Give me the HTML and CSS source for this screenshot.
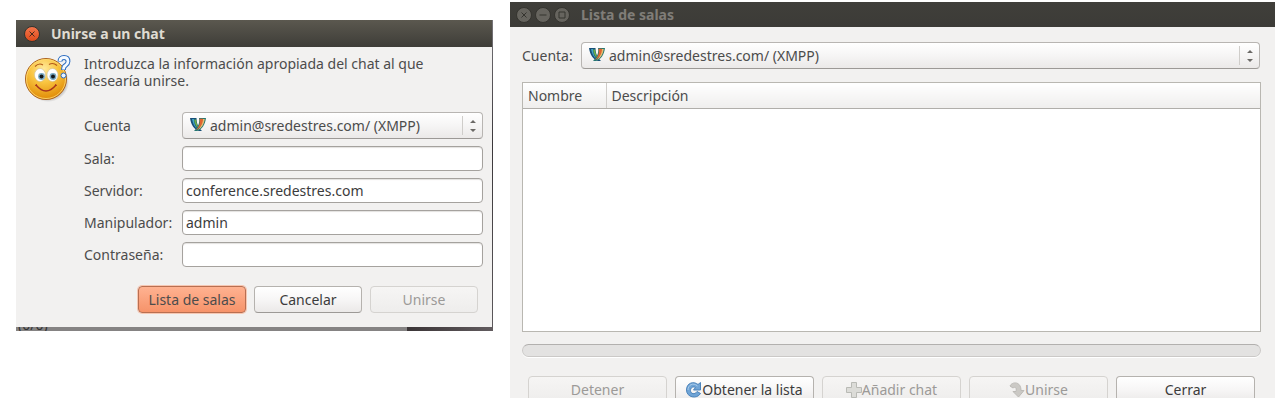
FILE: index.html
```
<!DOCTYPE html>
<html lang="es">
<head>
<meta charset="utf-8">
<title>Unirse a un chat</title>
<link rel="stylesheet" href="styles.css">
</head>
<body>
<svg class="defs" aria-hidden="true">
  <defs>
    <symbol id="xmpp" viewBox="0 0 16 14">
      <path d="M0 0H6.500C6.500 5 8 9 12 13H9C4 11.500 1 7 0 0Z" fill="#174f78"/>
      <path d="M2 1H4C4 6 6 10 9 12C5 10 3 6 2 1Z" fill="#42a4c8"/>
      <path d="M4.200 1.500H6.200C6.200 6 8 9 10.500 12C6.500 10 4.500 6 4.200 1.500Z" fill="#6ab04a"/>
      <path d="M16 0H9C10 5 8 9 4 13H7C12 11.500 15 7 16 0Z" fill="#26776f"/>
      <path d="M14.800 1H12.500C12 6 10 10 7.500 12C12 10 14 6 14.800 1Z" fill="#e5bd73"/>
      <path d="M13 .8H9.500C10.500 5 9.500 8.500 6 12C11 9.500 13 5 13 .8Z" fill="#e3652f"/>
    </symbol>
    <symbol id="arrows" viewBox="0 0 6 12">
      <path d="M0 3 L3 0 L6 3Z M0 9 L3 12 L6 9Z" fill="#6b6966"/>
    </symbol>
  </defs>
</svg>
<main class="desktop">
  <section class="backdrop">
    <div class="window dialog">
      <header class="titlebar active">
        <button class="wm close" aria-label="Cerrar ventana"><svg viewBox="0 0 14 14"><path d="M4.500 4.500l5 5m0-5l-5 5"/></svg></button>
        <h1>Unirse a un chat</h1>
      </header>
      <form class="join">
        <svg class="smiley" viewBox="0 0 48 48" aria-hidden="true">
          <defs>
            <radialGradient id="face" cx=".45" cy=".25" r=".75"><stop offset="0" stop-color="#ffe99a"/><stop offset=".45" stop-color="#f9c440"/><stop offset="1" stop-color="#e08a05"/></radialGradient>
            <radialGradient id="shade"><stop offset=".7" stop-color="#555" stop-opacity=".6"/><stop offset="1" stop-color="#555" stop-opacity="0"/></radialGradient>
          </defs>
          <ellipse cx="24" cy="27" rx="21" ry="20" fill="url(#shade)"/>
          <circle cx="22" cy="24" r="20.500" fill="url(#face)" stroke="#ac6420"/>
          <circle cx="22" cy="24" r="19.500" fill="none" stroke="#ffdc78" stroke-opacity=".8"/>
          <ellipse cx="16" cy="20" rx="5.500" ry="6.500" fill="#fff" stroke="#cbbd98" stroke-width=".6"/>
          <ellipse cx="28.500" cy="20" rx="5.500" ry="6.500" fill="#fff" stroke="#cbbd98" stroke-width=".6"/>
          <circle cx="17.500" cy="21.500" r="3.400" fill="#78a9c3"/><circle cx="29" cy="21.500" r="3.400" fill="#78a9c3"/>
          <circle cx="17.500" cy="21.500" r="2" fill="#15181a"/><circle cx="29" cy="21.500" r="2" fill="#15181a"/>
          <path d="M11 11.500q4-4 8-1.500M25 9.500q4-2.500 8 1" fill="none" stroke="#b2591a" stroke-width="1.100"/>
          <path d="M12 30q10 12 20 0" fill="none" stroke="#a8341c" stroke-width="1.400"/>
          <path d="M11 30.500l2-1M31 29.500l2 1" stroke="#a8341c"/>
          <path d="M36 6.500q0-4 4-4 4 0 4 4 0 2-2.500 4-2 1-2 4.500" fill="none" stroke="#2b6bc0" stroke-width="4.800"/>
          <path d="M36 6q0-3.500 4-3.500 4 0 4 4 0 2-2.500 4-2 1-2 4" fill="none" stroke="#f5faff" stroke-width="2.800"/>
          <circle cx="39.500" cy="20.500" r="2.500" fill="#e8f3ff" stroke="#2b6bc0"/>
        </svg>
        <div class="join-main">
          <p class="intro">Introduzca la información apropiada del chat al que desearía unirse.</p>
          <div class="fields">
            <label for="cuenta">Cuenta</label>
            <div class="combo">
              <select id="cuenta"><option>admin@sredestres.com/ (XMPP)</option></select>
              <svg class="logo"><use href="#xmpp"/></svg><svg class="updown"><use href="#arrows"/></svg>
            </div>
            <label for="sala">Sala:</label><input id="sala" type="text">
            <label for="servidor">Servidor:</label><input id="servidor" type="text" value="conference.sredestres.com">
            <label for="manipulador">Manipulador:</label><input id="manipulador" type="text" value="admin">
            <label for="clave">Contraseña:</label><input id="clave" type="password">
          </div>
          <div class="actions">
            <button type="button" class="btn accent">Lista de salas</button>
            <button type="button" class="btn">Cancelar</button>
            <button type="button" class="btn" disabled>Unirse</button>
          </div>
        </div>
      </form>
    </div>
    <div class="behind"><span>(0/0)</span></div>
  </section>

  <section class="window rooms">
    <header class="titlebar">
      <button class="wm" aria-label="Cerrar ventana"><svg viewBox="0 0 14 14"><path d="M4.500 4.500l5 5m0-5l-5 5"/></svg></button>
      <button class="wm" aria-label="Minimizar"><svg viewBox="0 0 14 14"><path d="M3.500 7h7"/></svg></button>
      <button class="wm" aria-label="Maximizar"><svg viewBox="0 0 14 14"><path d="M4 4h6v6h-6z"/></svg></button>
      <h2>Lista de salas</h2>
    </header>
    <div class="rooms-body">
      <div class="account">
        <label for="cuenta-salas">Cuenta:</label>
        <div class="combo">
          <select id="cuenta-salas"><option>admin@sredestres.com/ (XMPP)</option></select>
          <svg class="logo"><use href="#xmpp"/></svg><svg class="updown"><use href="#arrows"/></svg>
        </div>
      </div>
      <div class="list">
        <table><thead><tr><th class="name" scope="col">Nombre</th><th scope="col">Descripción</th></tr></thead></table>
      </div>
      <progress value="0" max="1" aria-label="Progreso"></progress>
      <div class="toolbar">
        <button class="btn" disabled>Detener</button>
        <button class="btn"><svg viewBox="0 0 16 16"><path d="M14.500 11.500C11 17.500.5 15.500.5 8 .5.500 8 -1 12 2.500L14.500.5V8H7.500L9.500 5.500C6.500 4 4.500 6 4.500 8.500 4.500 12 9 13 11 9.500Z" fill="#6fa4d6" stroke="#4c83ba" stroke-linejoin="round"/><path d="M2 8C2 3 7 0 11.500 4" fill="none" stroke="#a9cbea"/></svg>Obtener la lista</button>
        <button class="btn" disabled><svg viewBox="0 0 16 16"><path d="M5.500.5h5v5h5v5h-5v5h-5v-5h-5v-5h5z" fill="#dcdcd8" stroke="#b9bab5"/></svg>Añadir chat</button>
        <button class="btn" disabled><svg viewBox="0 0 16 16"><path d="M1 4C3-.5 12-1 12 8.500h3L9.500 15 4 9.500h3C8 5.500 6 4.500 4 6z" fill="#cbc9c5" stroke="#bcbab6"/></svg>Unirse</button>
        <button class="btn">Cerrar</button>
      </div>
    </div>
  </section>
</main>
</body>
</html>
```
FILE: styles.css
```
* { box-sizing: border-box; }
body {
  margin: 0;
  background: #fff;
  color: #4c4c4c;
  font: 14px/17px "Noto Sans", "Open Sans", sans-serif;
}
button, input, select { font: inherit; color: inherit; margin: 0; }
h1, h2, p { margin: 0; }
.defs { position: absolute; width: 0; height: 0; }

.desktop {
  display: flex;
  align-items: flex-start;
  gap: 17px;
  padding: 2px 3px 0 16px;
}
.backdrop {
  flex: 477 1 0;
  min-width: 0;
  margin-top: 18px;
  background: linear-gradient(#77757a, #3b383b 40%, #5d595c);
}
.window { background: #f2f1f0; }
.dialog { margin-right: 1px; }

.titlebar {
  display: flex;
  align-items: center;
  gap: 3px;
  height: 25px;
  padding-left: 6px;
  background: linear-gradient(#403f3a, #3c3b37);
  color: #807d78;
}
.titlebar.active {
  height: 27px;
  padding-left: 8px;
  background: linear-gradient(#5b584f, #3e3d38);
  color: #dfdbd2;
}
.titlebar h1, .titlebar h2 { margin-left: 8px; font-size: 14px; line-height: 17px; font-weight: 700; }
.wm {
  width: 16px;
  height: 16px;
  padding: 0;
  border: 1px solid #35342f;
  border-radius: 50%;
  background: #66645e;
}
.wm svg { display: block; width: 14px; height: 14px; fill: none; stroke: #35342f; stroke-width: 1; }
.wm.close { background: linear-gradient(#f4764c, #df4b1b); }
.wm.close svg { stroke: #4a2a1b; }

.join { display: flex; gap: 12px; padding: 8px 9px 14px 8px; }
.smiley { flex: none; width: 48px; height: 48px; overflow: visible; }
.join-main { flex: 1; min-width: 0; }
.intro { max-width: 376px; }
.fields {
  display: grid;
  grid-template-columns: 91px 1fr;
  align-items: center;
  gap: 7px;
  margin-top: 23px;
}
.fields label { white-space: nowrap; }
input {
  width: 100%;
  height: 25px;
  padding: 0 3px;
  border: 1px solid #a5a29e;
  border-radius: 4px;
  background: #fff;
  box-shadow: inset 0 1px 1px #e3e1df;
  color: #3c3c3c;
}
.combo { position: relative; flex: 1; min-width: 0; }
select {
  display: block;
  appearance: none;
  width: 100%;
  height: 27px;
  padding: 0 28px 0 27px;
  border: 1px solid #b8b5b2;
  border-bottom-color: #9c9996;
  border-radius: 4px;
  background: linear-gradient(#fff, #f6f5f5 50%, #ebe9e8);
}
.combo::after {
  content: "";
  position: absolute;
  top: 4px;
  bottom: 4px;
  right: 20px;
  border-left: 1px solid #cfcdca;
}
.logo, .updown { position: absolute; pointer-events: none; }
.logo { left: 8px; top: 6px; width: 16px; height: 14px; }
.updown { right: 7px; top: 8px; width: 6px; height: 12px; }

.actions { display: flex; justify-content: flex-end; gap: 8px; margin: 19px 5px 0 0; }
.btn {
  display: flex;
  align-items: center;
  justify-content: center;
  height: 27px;
  padding: 0;
  border: 1px solid #b5b2ae;
  border-bottom-color: #9c9996;
  border-radius: 4px;
  background: linear-gradient(#fff, #f7f6f6 50%, #ebe9e8);
  color: #3c3c3c;
  white-space: nowrap;
}
.actions .btn { width: 108px; }
.btn svg { flex: none; width: 16px; height: 16px; }
.btn.accent {
  border-color: #b96f51;
  background: linear-gradient(#ffb291, #f6936a);
  box-shadow: 0 0 0 1px #f6c7b3;
  color: #4c4c4c;
}
.btn:disabled { border-color: #d5d3d0; background: linear-gradient(#f6f5f4, #eeedec); color: #9c9a98; }

.behind {
  height: 4px;
  overflow: hidden;
  padding-left: 2px;
  background: linear-gradient(90deg, #858383 82%, #3b3537 82%, #625c5f);
  color: #333;
}
.behind span { display: block; margin-top: -11px; }

.rooms { flex: 765 1 0; min-width: 0; }
.rooms-body { padding: 15px 14px 0 12px; }
.account { display: flex; align-items: center; gap: 6px; padding-right: 1px; }
.account label { min-width: 53px; }
.list { min-height: 250px; margin-top: 13px; border: 1px solid #b9b7b1; background: #fff; }
.list table { width: 100%; border-collapse: collapse; table-layout: fixed; }
.list th {
  height: 25px;
  padding: 0 5px;
  border-bottom: 1px solid #b0aeaa;
  background: linear-gradient(#fff, #efeeed);
  font-weight: 400;
  text-align: left;
}
.list .name { width: 83px; border-right: 1px solid #cfcdca; }
progress {
  display: block;
  appearance: none;
  width: 100%;
  height: 13px;
  margin-top: 12px;
  border: 1px solid #cbc9c7;
  border-top-color: #b2b0ae;
  border-radius: 7px;
  background: #e3e2e1;
  box-shadow: 0 1px 0 #fff;
}
progress::-webkit-progress-bar { background: transparent; }
.toolbar {
  display: grid;
  grid-template-columns: repeat(5, 1fr);
  gap: 8px;
  height: 22px;
  margin: 19px 6px 0;
  overflow: hidden;
}
```
